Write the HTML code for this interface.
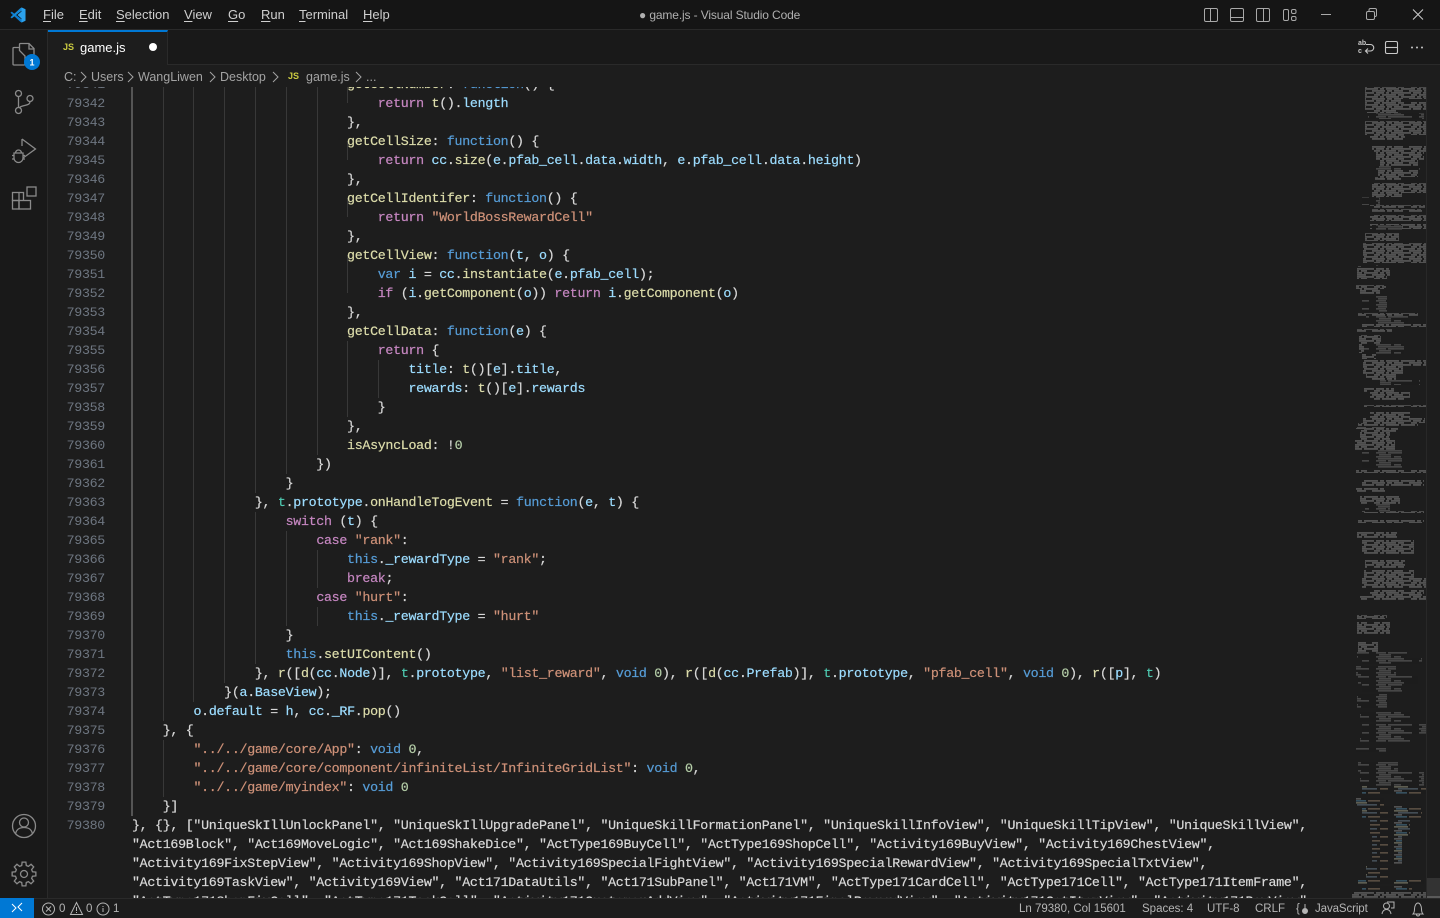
<!DOCTYPE html>
<html lang="en"><head><meta charset="utf-8"><title>game.js - Visual Studio Code</title>
<style>
html,body{margin:0;padding:0;width:1440px;height:918px;overflow:hidden;background:#1d1d1d}
body{position:relative;font-family:"Liberation Sans",sans-serif;color:#ccc}
.a{position:absolute;white-space:pre}
#title{left:0;top:0;width:1440px;height:29px;background:#151515;border-bottom:1px solid #2a2a2a}
.m{top:7px;font-size:13px;line-height:16px;color:#cfcfcf}
.m u{text-underline-offset:2px}
#act{left:0;top:30px;width:47px;height:868px;background:#191919;border-right:1px solid #2a2a2a}
#tabs{left:48px;top:30px;width:1392px;height:34px;background:#191919;border-bottom:1px solid #2a2a2a}
#tab{left:48px;top:30px;width:120px;height:35px;background:#1d1d1d;border-top:2px solid #0078d4;box-sizing:border-box;border-right:1px solid #2a2a2a}
.js{font:bold 9px "Liberation Sans",sans-serif;color:#cbcb41}
.b{top:69px;font-size:12.5px;line-height:16px;color:#a3a3a3}
#clip{left:48px;top:87px;width:1392px;height:811px;overflow:hidden}
#nums{left:0;top:-12px;width:57px;text-align:right;color:#6e7681}
#code{left:84px;top:-12px;color:#d8d8d8;-webkit-text-stroke:.2px currentColor}
#nums,#code{font:13.3px/19px "Liberation Mono",monospace;letter-spacing:-.3px}
.g{position:absolute;width:1px;background:#383838}
i{font-style:normal}
.k{color:#c586c0}.l{color:#569cd6}.f{color:#dcdcaa}.v{color:#9cdcfe}.s{color:#ce9178}.n{color:#b5cea8}.t{color:#4ec9b0}.c{color:#4fc1ff}
#status{left:0;top:898px;width:1440px;height:20px;background:#1c1c1c;border-top:1px solid #2a2a2a;box-sizing:border-box}
.st{top:901px;font-size:11.5px;line-height:16px;color:#b5b5b5}
svg{position:absolute;overflow:visible}
</style></head><body>

<div class="a" id="clip">
<div class="g" style="left:83px;width:2px;top:0;height:729px;background:#555"></div>
<div class="g" style="left:115px;top:0;height:634px"></div>
<div class="g" style="left:115px;top:653px;height:57px"></div>
<div class="g" style="left:145px;top:0;height:615px"></div>
<div class="g" style="left:176px;top:0;height:596px"></div>
<div class="g" style="left:207px;top:0;height:406px"></div>
<div class="g" style="left:207px;top:425px;height:152px"></div>
<div class="g" style="left:238px;top:0;height:387px"></div>
<div class="g" style="left:238px;top:444px;height:95px"></div>
<div class="g" style="left:269px;top:0;height:368px"></div>
<div class="g" style="left:269px;top:463px;height:38px"></div>
<div class="g" style="left:269px;top:520px;height:19px"></div>
<div class="g" style="left:299px;top:0;height:16px"></div>
<div class="g" style="left:299px;top:54px;height:19px"></div>
<div class="g" style="left:299px;top:111px;height:19px"></div>
<div class="g" style="left:299px;top:168px;height:38px"></div>
<div class="g" style="left:299px;top:254px;height:76px"></div>
<div class="g" style="left:330px;top:273px;height:38px"></div>
<div class="a" id="nums">79341
79342
79343
79344
79345
79346
79347
79348
79349
79350
79351
79352
79353
79354
79355
79356
79357
79358
79359
79360
79361
79362
79363
79364
79365
79366
79367
79368
79369
79370
79371
79372
79373
79374
79375
79376
79377
79378
79379
79380</div>
<div class="a" id="code">                            <i class="f">getCellNumber</i>: <i class="l">function</i>() {
                                <i class="k">return</i> <i class="f">t</i>().<i class="v">length</i>
                            },
                            <i class="f">getCellSize</i>: <i class="l">function</i>() {
                                <i class="k">return</i> <i class="v">cc</i>.<i class="f">size</i>(<i class="v">e</i>.<i class="v">pfab_cell</i>.<i class="v">data</i>.<i class="v">width</i>, <i class="v">e</i>.<i class="v">pfab_cell</i>.<i class="v">data</i>.<i class="v">height</i>)
                            },
                            <i class="f">getCellIdentifer</i>: <i class="l">function</i>() {
                                <i class="k">return</i> <i class="s">"WorldBossRewardCell"</i>
                            },
                            <i class="f">getCellView</i>: <i class="l">function</i>(<i class="v">t</i>, <i class="v">o</i>) {
                                <i class="l">var</i> <i class="v">i</i> = <i class="v">cc</i>.<i class="f">instantiate</i>(<i class="v">e</i>.<i class="v">pfab_cell</i>);
                                <i class="k">if</i> (<i class="v">i</i>.<i class="f">getComponent</i>(<i class="v">o</i>)) <i class="k">return</i> <i class="v">i</i>.<i class="f">getComponent</i>(<i class="v">o</i>)
                            },
                            <i class="f">getCellData</i>: <i class="l">function</i>(<i class="v">e</i>) {
                                <i class="k">return</i> {
                                    <i class="v">title</i>: <i class="f">t</i>()[<i class="v">e</i>].<i class="v">title</i>,
                                    <i class="v">rewards</i>: <i class="f">t</i>()[<i class="v">e</i>].<i class="v">rewards</i>
                                }
                            },
                            <i class="f">isAsyncLoad</i>: !<i class="n">0</i>
                        })
                    }
                }, <i class="t">t</i>.<i class="v">prototype</i>.<i class="f">onHandleTogEvent</i> = <i class="l">function</i>(<i class="v">e</i>, <i class="v">t</i>) {
                    <i class="k">switch</i> (<i class="v">t</i>) {
                        <i class="k">case</i> <i class="s">"rank"</i>:
                            <i class="l">this</i>.<i class="v">_rewardType</i> = <i class="s">"rank"</i>;
                            <i class="k">break</i>;
                        <i class="k">case</i> <i class="s">"hurt"</i>:
                            <i class="l">this</i>.<i class="v">_rewardType</i> = <i class="s">"hurt"</i>
                    }
                    <i class="l">this</i>.<i class="f">setUIContent</i>()
                }, <i class="f">r</i>([<i class="f">d</i>(<i class="v">cc</i>.<i class="v">Node</i>)], <i class="t">t</i>.<i class="v">prototype</i>, <i class="s">"list_reward"</i>, <i class="l">void</i> <i class="n">0</i>), <i class="f">r</i>([<i class="f">d</i>(<i class="v">cc</i>.<i class="v">Prefab</i>)], <i class="t">t</i>.<i class="v">prototype</i>, <i class="s">"pfab_cell"</i>, <i class="l">void</i> <i class="n">0</i>), <i class="f">r</i>([<i class="v">p</i>], <i class="t">t</i>)
            }(<i class="v">a</i>.<i class="v">BaseView</i>);
        <i class="v">o</i>.<i class="v">default</i> = <i class="v">h</i>, <i class="v">cc</i>.<i class="v">_RF</i>.<i class="f">pop</i>()
    }, {
        <i class="s">"../../game/core/App"</i>: <i class="l">void</i> <i class="n">0</i>,
        <i class="s">"../../game/core/component/infiniteList/InfiniteGridList"</i>: <i class="l">void</i> <i class="n">0</i>,
        <i class="s">"../../game/myindex"</i>: <i class="l">void</i> <i class="n">0</i>
    }]
}, {}, ["UniqueSkIllUnlockPanel", "UniqueSkIllUpgradePanel", "UniqueSkillFormationPanel", "UniqueSkillInfoView", "UniqueSkillTipView", "UniqueSkillView",
"Act169Block", "Act169MoveLogic", "Act169ShakeDice", "ActType169BuyCell", "ActType169ShopCell", "Activity169BuyView", "Activity169ChestView",
"Activity169FixStepView", "Activity169ShopView", "Activity169SpecialFightView", "Activity169SpecialRewardView", "Activity169SpecialTxtView",
"Activity169TaskView", "Activity169View", "Act171DataUtils", "Act171SubPanel", "Act171VM", "ActType171CardCell", "ActType171Cell", "ActType171ItemFrame",
"ActType171ShopFixCell", "ActType171TaskCell", "Activity171CustomerAddView", "Activity171FinalRewardView", "Activity171GetItemView", "Activity171PayView",</div>
</div>

<svg style="left:1350px;top:87px" width="90" height="811" viewBox="1350 87 90 811">
<defs>
<pattern id="p1" width="37" height="8" patternUnits="userSpaceOnUse"><rect width="37" height="8" fill="#1d1d1d"/><g fill="#777"><rect y=".4" width="9" height="1.100"/><rect x="11" y=".4" width="4" height="1.100"/><rect x="17" y=".4" width="13" height="1.100"/><rect x="32" y=".4" width="5" height="1.100"/><rect x="3" y="2.400" width="13" height="1.100"/><rect x="18" y="2.400" width="5" height="1.100"/><rect x="25" y="2.400" width="9" height="1.100"/><rect y="4.400" width="5" height="1.100"/><rect x="7" y="4.400" width="8" height="1.100"/><rect x="17" y="4.400" width="3" height="1.100"/><rect x="22" y="4.400" width="15" height="1.100"/><rect x="5" y="6.400" width="6" height="1.100"/><rect x="13" y="6.400" width="14" height="1.100"/><rect x="29" y="6.400" width="6" height="1.100"/></g></pattern>
<pattern id="p2" width="43" height="8" patternUnits="userSpaceOnUse"><rect width="43" height="8" fill="#1d1d1d"/><g fill="#626262"><rect y=".4" width="15" height="1"/><rect x="18" y=".4" width="7" height="1"/><rect x="2" y="2.400" width="26" height="1"/><rect y="4.400" width="10" height="1"/><rect x="12" y="4.400" width="24" height="1"/><rect x="3" y="6.400" width="12" height="1"/></g></pattern>
<pattern id="p3" width="41" height="8" patternUnits="userSpaceOnUse"><rect width="41" height="8" fill="#1d1d1d"/><rect x="2" y=".4" width="11" height="1" fill="#47718a"/><rect x="15" y=".4" width="12" height="1" fill="#7c6a58"/><rect y="2.400" width="14" height="1" fill="#8a8a74"/><rect x="4" y="4.400" width="20" height="1" fill="#5c6c78"/><rect x="27" y="4.400" width="8" height="1" fill="#7c6a58"/><rect y="6.400" width="8" height="1" fill="#777"/></pattern>
<filter id="bl" x="-5%" y="-5%" width="110%" height="110%"><feGaussianBlur stdDeviation=".35"/></filter>
</defs>
<g filter="url(#bl)">
<g fill="url(#p1)">
<rect x="1365" y="87" width="61" height="12"/><rect x="1365" y="99" width="36" height="3"/><rect x="1365" y="102" width="61" height="8"/><rect x="1367" y="110" width="31" height="3"/>
<rect x="1365" y="121" width="61" height="14"/><rect x="1370" y="135" width="35" height="5"/>
<rect x="1372" y="146" width="54" height="6"/><rect x="1376" y="152" width="48" height="8"/><rect x="1380" y="160" width="38" height="6"/><rect x="1378" y="170" width="40" height="7"/>
<rect x="1375" y="177" width="26" height="3"/><rect x="1372" y="183" width="54" height="10"/><rect x="1372" y="193" width="30" height="4"/>
<rect x="1370" y="205" width="55" height="3"/><rect x="1372" y="209" width="50" height="3"/><rect x="1370" y="215" width="56" height="6"/><rect x="1370" y="224" width="56" height="5"/>
<rect x="1365" y="233" width="34" height="8"/>
<rect x="1363" y="243" width="63" height="20"/>
<rect x="1357" y="268" width="33" height="8"/><rect x="1357" y="276" width="30" height="3"/>
<rect x="1356" y="285" width="30" height="4"/><rect x="1360" y="289" width="20" height="5"/>
<rect x="1358" y="313" width="60" height="3"/><rect x="1362" y="324" width="64" height="3"/><rect x="1357" y="329" width="35" height="3"/>
<rect x="1359" y="335" width="22" height="18"/><rect x="1362" y="353" width="14" height="6"/>
<rect x="1363" y="360" width="63" height="6"/><rect x="1363" y="366" width="40" height="8"/><rect x="1366" y="374" width="30" height="6"/>
<rect x="1364" y="388" width="30" height="4"/><rect x="1370" y="392" width="40" height="8"/><rect x="1364" y="405" width="62" height="2"/>
<rect x="1370" y="412" width="40" height="6"/><rect x="1363" y="418" width="62" height="5"/>
<rect x="1364" y="428" width="34" height="4"/><rect x="1358" y="423" width="60" height="3"/>
<rect x="1356" y="427" width="30" height="2"/><rect x="1360" y="430" width="30" height="10"/>
<rect x="1355" y="440" width="40" height="10"/><rect x="1356" y="470" width="70" height="3"/><rect x="1362" y="480" width="62" height="6"/>
<rect x="1356" y="488" width="30" height="4"/><rect x="1360" y="496" width="40" height="8"/>
<rect x="1362" y="511" width="62" height="2"/><rect x="1358" y="520" width="66" height="3"/><rect x="1357" y="532" width="40" height="6"/>
<rect x="1362" y="540" width="52" height="14"/><rect x="1365" y="560" width="40" height="8"/>
<rect x="1364" y="570" width="50" height="8"/><rect x="1362" y="578" width="64" height="10"/><rect x="1370" y="590" width="54" height="6"/>
<rect x="1360" y="596" width="66" height="4"/><rect x="1357" y="615" width="30" height="4"/>
<rect x="1357" y="622" width="33" height="12"/><rect x="1358" y="642" width="20" height="10"/>
</g>
<g fill="url(#p2)">
<rect x="1368" y="113" width="56" height="6"/><rect x="1375" y="166" width="45" height="4"/><rect x="1362" y="197" width="18" height="8"/><rect x="1372" y="225" width="30" height="5"/>
<rect x="1358" y="265" width="20" height="2"/><rect x="1362" y="296" width="25" height="16"/><rect x="1366" y="316" width="42" height="8"/>
<rect x="1364" y="344" width="40" height="10"/><rect x="1380" y="380" width="40" height="5"/><rect x="1362" y="450" width="40" height="18"/><rect x="1365" y="504" width="25" height="8"/>
<rect x="1357" y="652" width="50" height="6"/><rect x="1362" y="658" width="60" height="6"/><rect x="1356" y="666" width="40" height="10"/><rect x="1358" y="676" width="60" height="8"/>
<rect x="1362" y="684" width="40" height="8"/><rect x="1357" y="694" width="30" height="14"/><rect x="1360" y="712" width="50" height="10"/><rect x="1362" y="724" width="64" height="10"/>
<rect x="1360" y="734" width="50" height="8"/><rect x="1356" y="748" width="30" height="4"/><rect x="1358" y="762" width="40" height="10"/><rect x="1360" y="772" width="64" height="14"/>
</g>
<g fill="url(#p3)">
<rect x="1362" y="786" width="64" height="8"/><rect x="1356" y="798" width="28" height="8"/><rect x="1362" y="806" width="60" height="12"/>
<rect x="1370" y="820" width="40" height="16"/><rect x="1372" y="836" width="30" height="28"/><rect x="1366" y="866" width="24" height="12"/>
<rect x="1358" y="880" width="66" height="4"/><rect x="1362" y="886" width="50" height="4"/>
</g>
<rect x="1352" y="892" width="74" height="6" fill="url(#p1)"/>
</g>
<rect x="1426" y="87" width="1" height="811" fill="#282828"/>
<rect x="1427" y="878" width="13" height="20" fill="#333"/>
<rect x="1427" y="896" width="13" height="2" fill="#5a5a5a"/>
</svg>

<div class="a" id="title"></div>
<svg style="left:10px;top:7px" width="16" height="16" viewBox="0 0 100 100"><path d="M3 36L11 29 74 78V98L64 92z" fill="#0c7cd0"/><path d="M3 64L11 71 74 22V2L64 8z" fill="#148ad8"/><path d="M72 2L97 14V86L72 98z M72 28L47 50 72 72z" fill-rule="evenodd" fill="#2ba1ec"/></svg>
<div class="a m" style="left:43px"><u>F</u>ile</div>
<div class="a m" style="left:79px"><u>E</u>dit</div>
<div class="a m" style="left:116px"><u>S</u>election</div>
<div class="a m" style="left:184px"><u>V</u>iew</div>
<div class="a m" style="left:228px"><u>G</u>o</div>
<div class="a m" style="left:261px"><u>R</u>un</div>
<div class="a m" style="left:299px"><u>T</u>erminal</div>
<div class="a m" style="left:363px"><u>H</u>elp</div>
<div class="a" style="left:639px;top:7px;font-size:12px;letter-spacing:-.13px;line-height:16px;color:#b0b0b0">● game.js - Visual Studio Code</div>

<svg style="left:1140px;top:0" width="300" height="30" viewBox="0 0 300 30" fill="none" stroke="#a9a9a9" stroke-width="1">
<rect x="64.5" y="8.5" width="13" height="13" rx="1.5"/><path d="M70.5 8.5V21.5"/>
<rect x="90.5" y="8.5" width="13" height="13" rx="1.5"/><path d="M90.5 17.5H103.5"/>
<rect x="116.5" y="8.5" width="13" height="13" rx="1.5"/><path d="M123.5 8.5V21.5"/>
<rect x="143.5" y="9.5" width="5" height="11" rx="1.5"/><rect x="151.5" y="9.5" width="4.500" height="4" rx="1.5"/><rect x="151.5" y="16.5" width="4.500" height="4" rx="1.5"/>
<path d="M181 14.500H191"/>
<rect x="226.500" y="11.500" width="8" height="8" rx="1.500"/><path d="M229 11.500V10a1.500 1.500 0 0 1 1.500-1.500H235a1.500 1.500 0 0 1 1.500 1.500V15a1.500 1.500 0 0 1-1.500 1.500"/>
<path d="M273 9.500L283 19.500M283 9.500L273 19.500" stroke="#ccc"/>
</svg>

<div class="a" id="act"></div>
<svg style="left:0;top:0" width="48" height="898" viewBox="0 0 48 898" fill="none" stroke="#8a8a8a" stroke-width="1.300">
<path d="M19.500 47.500V44.500a1 1 0 0 1 1-1h8.500l5 5V60a1 1 0 0 1-1 1H25M29 43.500V49h5"/>
<path d="M19.500 47.500H14a1 1 0 0 0-1 1V64a1 1 0 0 0 1 1H24a1 1 0 0 0 1-1V56l-5.500-5.500z"/>
<circle cx="18.500" cy="93.500" r="3"/><circle cx="18.500" cy="110.500" r="3"/><circle cx="30" cy="98.500" r="3"/>
<path d="M18.500 96.500V107.500M30 101.500c0 5-8 3-11 6.500"/>
<path d="M22 139L35.500 149 23 158"/><path d="M22 139V146"/>
<path d="M14 153h9v5a4.500 4.500 0 0 1-9 0zM15.500 153a3 3 0 0 1 6 0M14 155.500H12M23 155.500H25M14 159H12M23 159H25"/>
<rect x="12.500" y="192.500" width="6.500" height="8"/><rect x="12.500" y="200.500" width="6.500" height="8.500"/><rect x="19" y="200.500" width="11.500" height="8.500"/><rect x="27" y="187" width="9" height="9"/>
<path d="M19 192.500H23.500V200.500"/>
<circle cx="24" cy="826" r="11.500"/><circle cx="24" cy="822.500" r="4.500"/><path d="M15.500 834c1-5 4-6.500 8.500-6.500s7.500 1.500 8.500 6.500"/>
<g transform="translate(24 874)"><polygon points="-2.28,-8.5 -1.88,-11.85 1.88,-11.85 2.28,-8.5 4.40,-7.62 7.05,-9.71 9.71,-7.05 7.62,-4.40 8.5,-2.28 11.85,-1.88 11.85,1.88 8.5,2.28 7.62,4.40 9.71,7.05 7.05,9.71 4.40,7.62 2.28,8.5 1.88,11.85 -1.88,11.85 -2.28,8.5 -4.40,7.62 -7.05,9.71 -9.71,7.05 -7.62,4.40 -8.5,2.28 -11.85,1.88 -11.85,-1.88 -8.5,-2.28 -7.62,-4.40 -9.71,-7.05 -7.05,-9.71 -4.40,-7.62"/><circle r="3.500"/></g>
<circle cx="32" cy="62" r="8" fill="#0078d4" stroke="none"/>
<text x="32" y="65.500" text-anchor="middle" font-family="Liberation Sans" font-weight="bold" font-size="9" fill="#fff" stroke="none">1</text>
</svg>

<div class="a" id="tabs"></div>
<div class="a" id="tab"></div>
<div class="a js" style="left:63px;top:42px">JS</div>
<div class="a" style="left:80px;top:40px;font-size:13px;line-height:16px;color:#fff">game.js</div>
<svg style="left:148px;top:42px" width="10" height="10"><circle cx="5" cy="5" r="4" fill="#fff"/></svg>

<svg style="left:1355px;top:38px" width="72" height="18" viewBox="0 0 72 18" fill="none" stroke="#c8c8c8" stroke-width="1.100">
<text x="3" y="7" font-family="Liberation Sans" font-weight="bold" font-size="7" fill="#c8c8c8" stroke="none">ab</text>
<text x="3" y="15" font-family="Liberation Sans" font-weight="bold" font-size="7" fill="#c8c8c8" stroke="none">c</text>
<path d="M11 13H15.500a2.500 2.500 0 0 0 0-6.500H11M13 10.500L10.500 13 13 15.500"/>
<rect x="30.500" y="3.500" width="12" height="12" rx="1.500"/><path d="M30.500 9.500H42.500"/>
<circle cx="57" cy="9.500" r="1" fill="#c8c8c8" stroke="none"/><circle cx="62" cy="9.500" r="1" fill="#c8c8c8" stroke="none"/><circle cx="67" cy="9.500" r="1" fill="#c8c8c8" stroke="none"/>
</svg>

<div class="a b" style="left:64px">C:</div>
<div class="a b" style="left:91px">Users</div>
<div class="a b" style="left:138px">WangLiwen</div>
<div class="a b" style="left:220px">Desktop</div>
<div class="a js" style="left:288px;top:71px">JS</div>
<div class="a b" style="left:306px">game.js</div>
<div class="a b" style="left:366px">...</div>
<svg style="left:0;top:70px" width="370" height="14" fill="none" stroke="#a3a3a3" stroke-width="1"><path d="M81 2L86 7 81 12M128 2L133 7 128 12M210 2L215 7 210 12M273 2L278 7 273 12M356 2L361 7 356 12"/></svg>

<div class="a" id="status"></div>
<div class="a" style="left:0;top:898px;width:34px;height:20px;background:#0078d4"></div>
<svg style="left:0;top:898px" width="130" height="20" viewBox="0 0 130 20" fill="none" stroke="#b5b5b5" stroke-width="1">
<path d="M12 6L16 10 12 14M22 5L18 9 22 13" stroke="#fff"/>
<circle cx="48.500" cy="11" r="6"/><path d="M46 8.500L51 13.500M51 8.500L46 13.500"/>
<path d="M76.500 4.500L82.500 16.500H70.500zM76.500 9V13M76.500 14V15"/>
<circle cx="103" cy="11" r="6"/><path d="M103 10V14M103 8V9"/>
</svg>
<div class="a st" style="left:59px">0</div>
<div class="a st" style="left:86px">0</div>
<div class="a st" style="left:113px">1</div>
<div class="a st" style="left:1019px">Ln 79380, Col 15601</div>
<div class="a st" style="left:1142px">Spaces: 4</div>
<div class="a st" style="left:1207px">UTF-8</div>
<div class="a st" style="left:1255px">CRLF</div>
<div class="a st" style="left:1296px">{</div>
<div class="a st" style="left:1315px;letter-spacing:-.1px">JavaScript</div>
<svg style="left:1300px;top:898px" width="130" height="20" viewBox="0 0 130 20" fill="none" stroke="#b5b5b5" stroke-width="1">
<circle cx="5" cy="13" r="2.500" fill="#b5b5b5"/><path d="M5 6V10"/>
<g transform="translate(80 0)"><circle cx="6.500" cy="8" r="3"/><path d="M2 16c.5-3 2-4.500 4.500-4.500S10.500 13 11 16M7 4H14V10H11"/>
<path d="M38 16H33c1-1 1.500-2 1.500-5 0-3 1.500-6 3.500-6s3.500 3 3.500 6c0 3 .500 4 1.500 5H38M36.500 16.500a1.500 1.500 0 0 0 3 0"/></g>
</svg>
</body></html>
